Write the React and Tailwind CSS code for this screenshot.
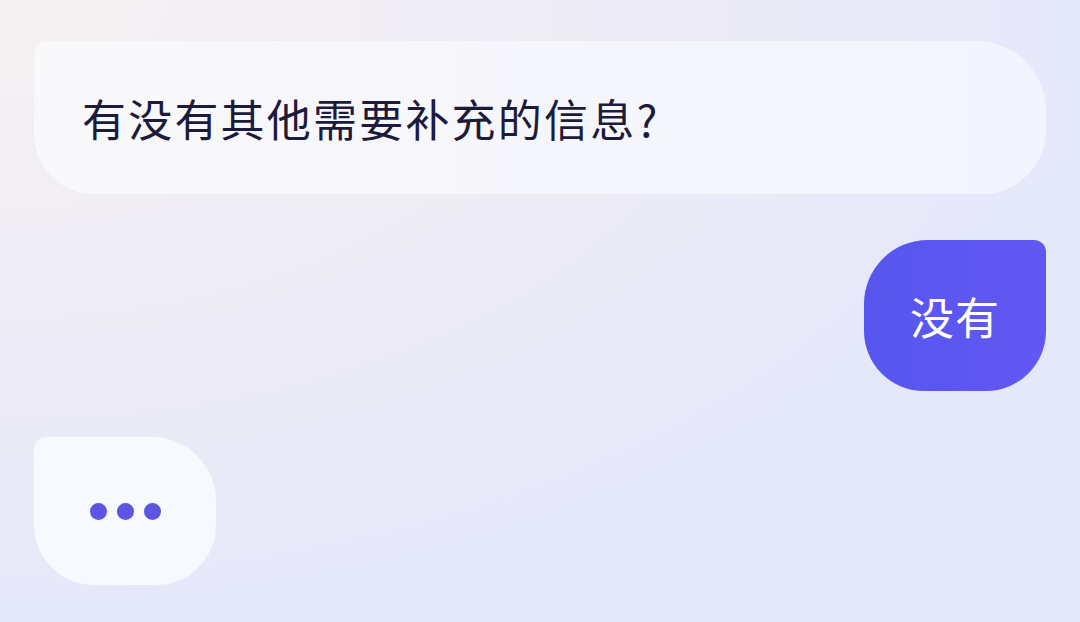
import React from 'react';

const font = { fontFamily: '"Noto Sans CJK SC", "Noto Sans", sans-serif' };

const App = () => {
    return (
        <div
            className="w-[1080px] h-[622px] overflow-hidden bg-[radial-gradient(ellipse_at_0%_0%,#f6f1f2_0%,#eeecf5_35%,#e4e8fb_75%)] px-[34px] pt-[41px] flex flex-col gap-[46px]"
            style={font}
        >
            <div className="h-[153px] flex items-center pl-[48px] bg-gradient-to-r from-[#f9f8fa] to-[#f2f5fe] rounded-tl-[14px] rounded-tr-[70px] rounded-br-[64px] rounded-bl-[60px]">
                <span className="text-[44px] leading-none text-[#1d1b3b] tracking-[2.2px]">有没有其他需要补充的信息?</span>
            </div>

            <div className="flex justify-end">
                <div className="w-[182px] h-[151px] flex items-center justify-center bg-gradient-to-r from-[#5656ef] to-[#6357f3] rounded-tr-[12px] rounded-tl-[64px] rounded-bl-[60px] rounded-br-[60px]">
                    <span className="text-[44px] leading-none text-white tracking-[1px]">没有</span>
                </div>
            </div>

            <div className="flex">
                <div className="w-[182px] h-[148px] flex items-center justify-center gap-[10px] bg-[#f8f9fe] rounded-tl-[12px] rounded-tr-[64px] rounded-bl-[60px] rounded-br-[60px]">
                    <span className="w-[17px] h-[17px] rounded-full bg-[#5b55e2]" />
                    <span className="w-[17px] h-[17px] rounded-full bg-[#5b55e2]" />
                    <span className="w-[17px] h-[17px] rounded-full bg-[#5b55e2]" />
                </div>
            </div>
        </div>
    );
};

export default App;
